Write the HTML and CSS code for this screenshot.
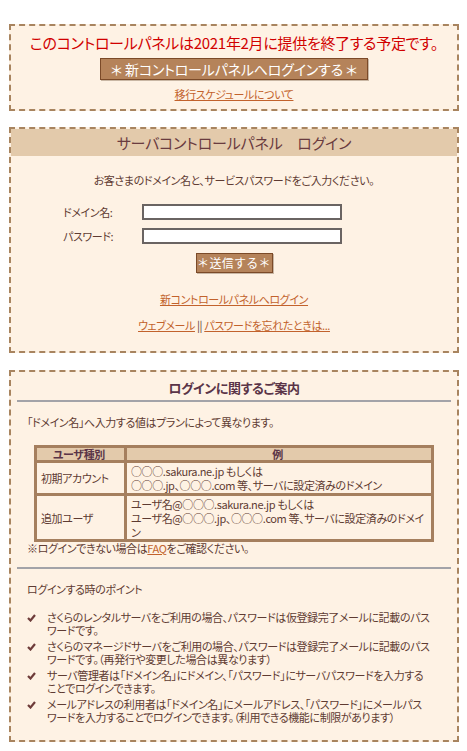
FILE: index.html
```html
<!DOCTYPE html>
<html lang="ja">
<head>
    <meta charset="UTF-8">
    <meta name="viewport" content="width=device-width, initial-scale=1.0">
    <title>サーバコントロールパネル ログイン</title>
    <link rel="stylesheet" href="styles.css">
</head>
<body>

<!-- 終了のお知らせ -->
<div class="box notice">
    <p class="notice-text">このコントロールパネルは2021年2月に提供を終了する予定です。</p>
    <a href="#" class="btn btn-large">＊ 新コントロールパネルへログインする ＊</a>
    <p class="notice-link"><a href="#">移行スケジュールについて</a></p>
</div>

<!-- ログインフォーム -->
<div class="box login">
    <h1 class="login-title">サーバコントロールパネル　ログイン</h1>
    <p class="lead">お客さまのドメイン名と、サービスパスワードをご入力ください。</p>
    <form class="login-form">
        <label class="row"><span class="row-label">ドメイン名:</span><input type="text" class="field"></label>
        <label class="row"><span class="row-label">パスワード:</span><input type="password" class="field"></label>
        <button type="button" class="btn btn-small">＊送信する＊</button>
    </form>
    <p class="links"><a href="#">新コントロールパネルへログイン</a></p>
    <p class="links links-2"><a href="#">ウェブメール</a> <span class="sep">||</span> <a href="#">パスワードを忘れたときは...</a></p>
</div>

<!-- ご案内 -->
<div class="box guide">
    <h2 class="guide-title">ログインに関するご案内</h2>
    <p class="guide-text">「ドメイン名」へ入力する値はプランによって異なります。</p>
    <table class="guide-table">
        <tr class="row-head">
            <th class="col-type">ユーザ種別</th>
            <th>例</th>
        </tr>
        <tr class="row-init">
            <td class="type">初期アカウント</td>
            <td>○○○.sakura.ne.jp もしくは<br>○○○.jp、○○○.com 等、サーバに設定済みのドメイン</td>
        </tr>
        <tr class="row-add">
            <td class="type">追加ユーザ</td>
            <td>ユーザ名@○○○.sakura.ne.jp もしくは<br>ユーザ名@○○○.jp、○○○.com 等、サーバに設定済みのドメイン</td>
        </tr>
    </table>
    <p class="guide-note">※ログインできない場合は<a href="#">FAQ</a>をご確認ください。</p>

    <p class="guide-text points-title">ログインする時のポイント</p>
    <ul class="points">
        <li><svg class="check" width="9" height="8" viewBox="0 0 9 8"><path d="M1 4 L3.5 6.5 L8 1" fill="none" stroke="#6e3c3a" stroke-width="2.2"/></svg>さくらのレンタルサーバをご利用の場合、パスワードは仮登録完了メールに記載のパスワードです。</li>
        <li><svg class="check" width="9" height="8" viewBox="0 0 9 8"><path d="M1 4 L3.5 6.5 L8 1" fill="none" stroke="#6e3c3a" stroke-width="2.2"/></svg>さくらのマネージドサーバをご利用の場合、パスワードは登録完了メールに記載のパスワードです。（再発行や変更した場合は異なります）</li>
        <li><svg class="check" width="9" height="8" viewBox="0 0 9 8"><path d="M1 4 L3.5 6.5 L8 1" fill="none" stroke="#6e3c3a" stroke-width="2.2"/></svg>サーバ管理者は「ドメイン名」にドメイン、「パスワード」にサーバパスワードを入力することでログインできます。</li>
        <li><svg class="check" width="9" height="8" viewBox="0 0 9 8"><path d="M1 4 L3.5 6.5 L8 1" fill="none" stroke="#6e3c3a" stroke-width="2.2"/></svg>メールアドレスの利用者は「ドメイン名」にメールアドレス、「パスワード」にメールパスワードを入力することでログインできます。（利用できる機能に制限があります）</li>
    </ul>
</div>

</body>
</html>
```

FILE: styles.css
```css
body {
    margin: 0;
    padding: 24px 8px 9px 9px;
    background: #fff;
    color: #5e3b32;
    font-family: "Noto Sans CJK JP", "Noto Sans", sans-serif;
    font-size: 11px;
    letter-spacing: -0.4px;
    font-feature-settings: "palt";
    line-height: 13px;
}

p {
    margin: 0;
}

a {
    color: #c2622c;
    text-decoration: underline;
}

/* 点線の枠 */
.box {
    width: 446px;
    border: 2px dashed #a8845f;
    background: #fef2e4;
}

/* ボタン */
.btn {
    display: inline-block;
    background: #b5835a;
    color: #fff;
    border: 1px solid #7b4a28;
    box-shadow: 1px 1px 0 #c9b7a4;
    text-decoration: none;
    font-family: inherit;
    white-space: nowrap;
    text-align: center;
    padding: 0;
    cursor: pointer;
}

.btn-large {
    font-size: 14px;
    letter-spacing: -0.2px;
    line-height: 20px;
    width: 266px;
}

.btn-small {
    font-size: 12px;
    letter-spacing: 0.3px;
    line-height: 18px;
    width: 77px;
}

/* お知らせ */
.notice {
    text-align: center;
    padding-bottom: 8px;
    margin-bottom: 16px;
}

.notice-text {
    color: #d10000;
    font-size: 15px;
    letter-spacing: -0.3px;
    line-height: 18px;
    margin: 8px 0 6px;
}

.notice-link {
    margin-top: 8px;
}

/* ログイン */
.login {
    text-align: center;
    padding-bottom: 19px;
    margin-bottom: 17px;
}

.login-title {
    margin: 0;
    background: #e3caab;
    color: #6a3b3f;
    font-size: 15px;
    letter-spacing: -0.2px;
    font-weight: normal;
    line-height: 27px;
}

.lead {
    margin: 18px 0 17px;
}

.login-form {
    display: flex;
    flex-direction: column;
    align-items: flex-start;
    padding-left: 52px;
}

.row {
    display: flex;
    align-items: center;
    margin-bottom: 8px;
}

.row-label {
    width: 79px;
    text-align: left;
}

.field {
    width: 196px;
    height: 12px;
    border: 2px solid #6a6462;
    padding: 0;
    margin: 0;
    background: #fff;
}

.login-form .btn-small {
    align-self: center;
    margin: 1px 0 0 -52px;
}

.links {
    margin-top: 20px;
}

.links-2 {
    margin-top: 13px;
}

.sep {
    color: #5e3b32;
}

/* ご案内 */
.guide {
    padding: 0 6px 13px;
    width: 434px;
}

.guide-title {
    margin: 0;
    padding: 8px 0 5px;
    border-bottom: 2px solid #a3a3a8;
    text-align: center;
    font-size: 13px;
    line-height: 15px;
    color: #5a3447;
}

.guide-text {
    padding-left: 10px;
    margin-top: 14px;
}

.guide-table {
    margin: 16px 0 0 17px;
    width: 400px;
    border-collapse: collapse;
    border: 3px solid #a57f5e;
}

.guide-table th,
.guide-table td {
    border: 3px solid #a57f5e;
    padding: 0 7px 0 4px;
    text-align: left;
    font-weight: normal;
    vertical-align: middle;
    line-height: 14px;
}

.guide-table th {
    background: #e3caab;
    text-align: center;
    font-weight: bold;
    color: #5a3447;
    line-height: 12px;
}

.row-head th {
    height: 12px;
}

.row-init td {
    height: 30px;
}

.row-add td {
    height: 43px;
}

.guide-table .col-type {
    width: 76px;
}

.guide-table .type {
    white-space: nowrap;
}

.guide-note {
    padding-left: 10px;
    padding-bottom: 12px;
    border-bottom: 2px solid #a3a3a8;
}

.points-title {
    margin-top: 14px;
}

.points {
    list-style: none;
    margin: 15px 0 0;
    padding: 0 20px 0 30px;
}

.points li {
    position: relative;
    margin-bottom: 3px;
}

/* チェックマーク */
.check {
    position: absolute;
    left: -20px;
    top: 3px;
}
```
